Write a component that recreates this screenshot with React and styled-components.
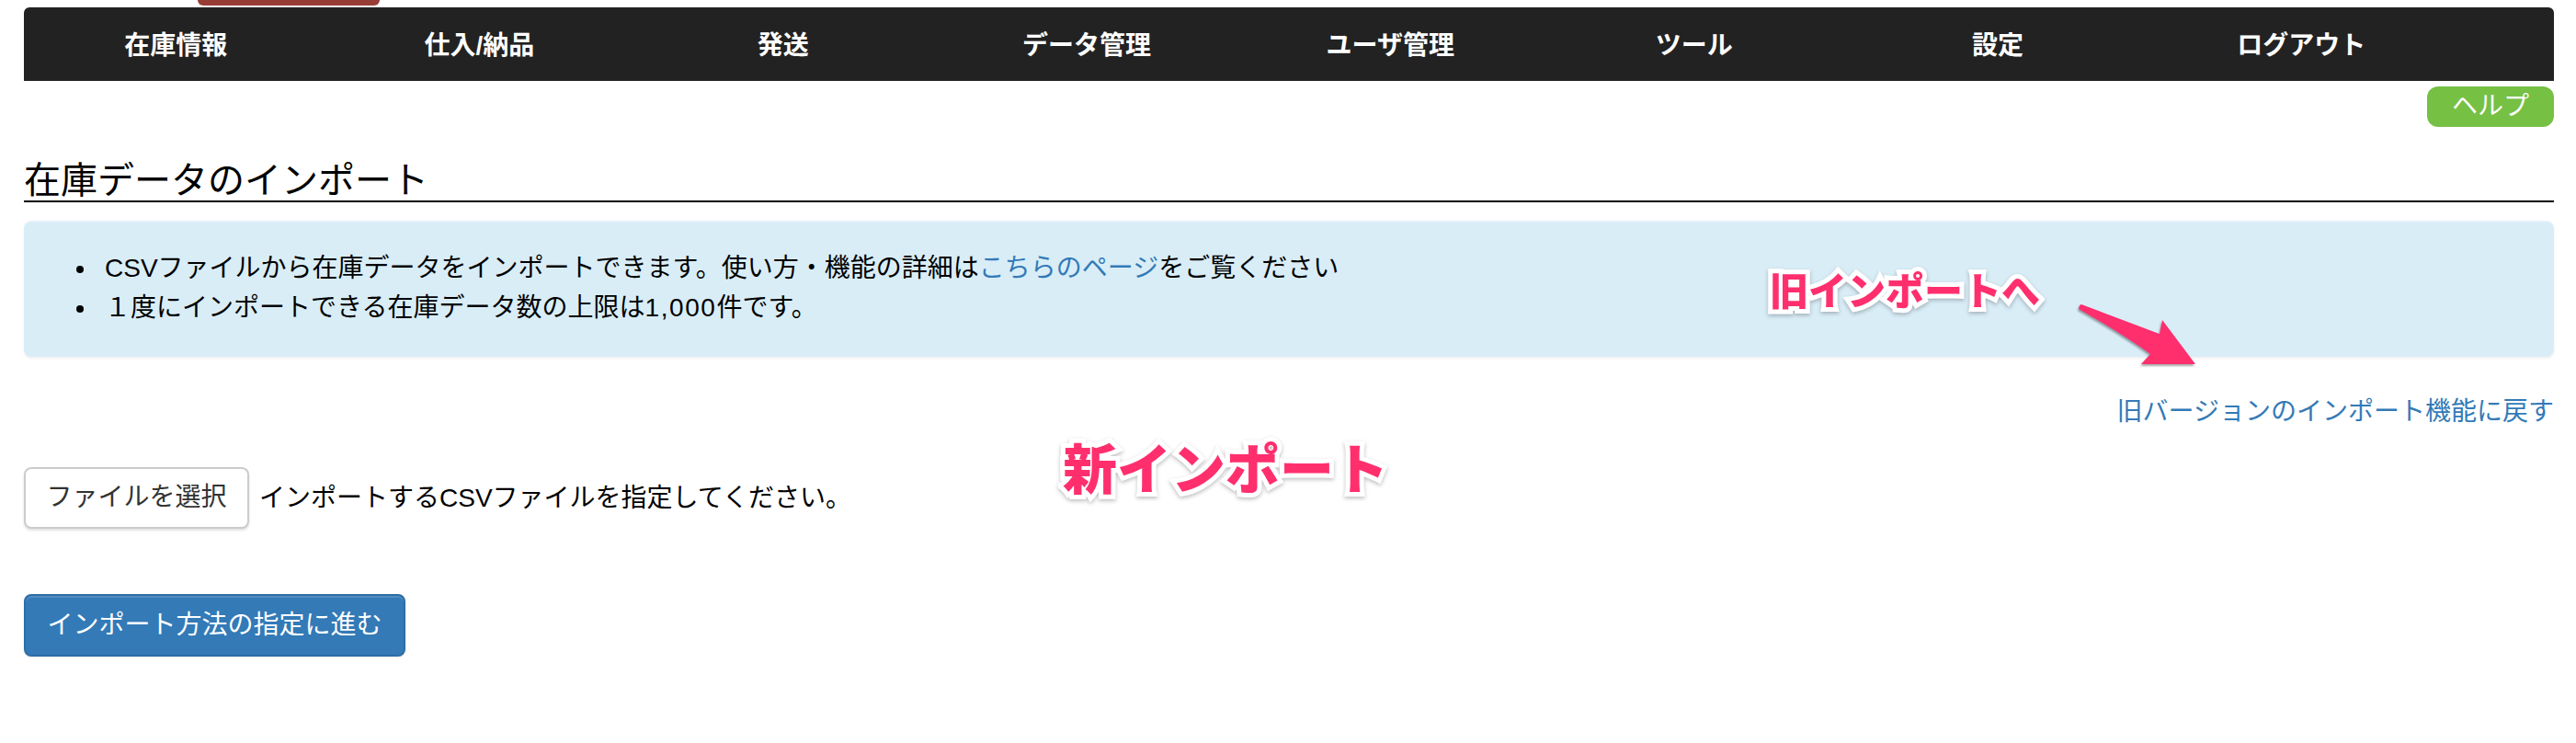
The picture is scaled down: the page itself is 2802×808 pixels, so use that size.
import React from 'react'
import styled, {createGlobalStyle} from 'styled-components'

const GlobalStyle = createGlobalStyle`
    html, body {
        margin: 0;
        background: #fff;
    }
    body {
        font-family: "Liberation Sans", "Noto Sans CJK JP", sans-serif;
        font-size: 28px;
        line-height: 40px;
        color: #000;
    }
    a {
        color: #337ab7;
        text-decoration: none;
    }
`

const Page = styled.div`
    position: relative;
    height: 808px;
    padding: 0 24px 0 26px;
    box-sizing: border-box;
    overflow: hidden;
`

const TopStrip = styled.div`
    height: 8px;
`

const RedTab = styled.div`
    width: 198px;
    height: 6px;
    margin-left: 189px;
    background: #973d36;
    border-radius: 0 0 8px 8px;
`

const NavBar = styled.ul`
    display: grid;
    grid-template-columns: repeat(8, 330.3px);
    height: 80px;
    margin: 0;
    padding: 0;
    list-style: none;
    background: #222;
    border-radius: 6px 6px 0 0;
`

const NavItem = styled.li`
    color: #fff;
    font-weight: 700;
    line-height: 84px;
    text-align: center;
`

const HelpRow = styled.div`
    display: flex;
    justify-content: flex-end;
    margin-top: 6px;
`

const HelpButton = styled.a`
    width: 138px;
    height: 44px;
    color: #fff;
    line-height: 44px;
    text-align: center;
    background: #76c044;
    border-radius: 12px;
`

const Heading = styled.h1`
    height: 46px;
    margin: 36px 0 0;
    box-sizing: border-box;
    font-size: 40px;
    font-weight: 400;
    line-height: 44px;
    border-bottom: 2px solid #000;
`

const InfoBox = styled.div`
    height: 148px;
    margin-top: 20px;
    padding: 28px 0 0;
    box-sizing: border-box;
    background: #d9edf7;
    border-top: 2px solid #e3f1f9;
    border-radius: 8px;
    box-shadow: 0 2px 3px rgba(0, 0, 0, 0.06);
`

const InfoList = styled.ul`
    margin: 0;
    padding: 0 0 0 88px;
    line-height: 43px;
    list-style: none;
`

const InfoItem = styled.li`
    &::before {
        content: '';
        display: inline-block;
        width: 8px;
        height: 8px;
        margin: 0 23px 0 -31px;
        vertical-align: 4px;
        background: #000;
        border-radius: 50%;
    }
`

const Count = styled.span`
    letter-spacing: 1.6px;
`

const LinkRow = styled.div`
    height: 40px;
    margin-top: 42px;
    line-height: 36px;
    text-align: right;
`

const FileRow = styled.div`
    display: flex;
    align-items: center;
    gap: 11px;
    margin-top: 38px;
    line-height: 36px;
`

const FileButton = styled.button`
    width: 245px;
    height: 67px;
    padding: 0 0 2px;
    font: inherit;
    color: #333;
    background: #fff;
    border: 2px solid #ccc;
    border-radius: 8px;
    box-shadow: 0 2px 3px rgba(0, 0, 0, 0.12);
`

const SubmitButton = styled.button`
    display: block;
    width: 415px;
    height: 68px;
    margin-top: 71px;
    padding: 0 0 1px;
    font: inherit;
    color: #fff;
    background: #337ab7;
    border: 2px solid #2e6da4;
    border-radius: 8px;
    box-shadow: inset 0 2px 0 rgba(255, 255, 255, 0.15), 0 1px 2px rgba(0, 0, 0, 0.1);
`

const Note = styled.div`
    position: absolute;
    left: ${props => props.x}px;
    top: ${props => props.y}px;
    font-family: "Noto Sans CJK JP", sans-serif;
    font-size: ${props => props.size}px;
    font-weight: 900;
    line-height: 1;
    color: #ff2f6e;
    white-space: nowrap;
    -webkit-text-stroke: 10px #fff;
    paint-order: stroke fill;
    filter: drop-shadow(0 2px 2px rgba(0, 0, 0, 0.25));
`

const ArrowSvg = styled.svg`
    position: absolute;
    left: 2250px;
    top: 325px;
    filter: drop-shadow(-1px 2px 1px rgba(0, 0, 0, 0.35));
`

const navItems = ['在庫情報', '仕入/納品', '発送', 'データ管理', 'ユーザ管理', 'ツール', '設定', 'ログアウト']

export default function App() {
    return (
        <Page>
            <GlobalStyle />
            <TopStrip>
                <RedTab />
            </TopStrip>
            <NavBar>
                {navItems.map(item => <NavItem key={item}>{item}</NavItem>)}
            </NavBar>
            <HelpRow>
                <HelpButton>ヘルプ</HelpButton>
            </HelpRow>
            <Heading>在庫データのインポート</Heading>
            <InfoBox>
                <InfoList>
                    <InfoItem>CSVファイルから在庫データをインポートできます。使い方・機能の詳細は<a href="#">こちらのページ</a>をご覧ください</InfoItem>
                    <InfoItem>１度にインポートできる在庫データ数の上限は<Count>1,000</Count>件です。</InfoItem>
                </InfoList>
            </InfoBox>
            <LinkRow>
                <a href="#">旧バージョンのインポート機能に戻す</a>
            </LinkRow>
            <FileRow>
                <FileButton>ファイルを選択</FileButton>
                <span>インポートするCSVファイルを指定してください。</span>
            </FileRow>
            <SubmitButton>インポート方法の指定に進む</SubmitButton>

            <Note x={1925} y={293} size={42}>旧インポートへ</Note>
            <Note x={1156} y={477} size={59}>新インポート</Note>
            <ArrowSvg width="150" height="80" viewBox="2250 325 150 80">
                <path d="M2262 332 L2264 331 Q2320 352 2349 363 L2352 348 L2388 396 L2329 396 L2339 385 Q2310 364 2261 336 Z" fill="#ff2f6e" />
            </ArrowSvg>
        </Page>
    )
}
